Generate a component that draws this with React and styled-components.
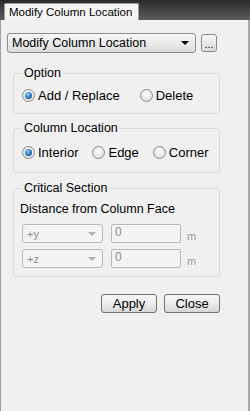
import styled, { createGlobalStyle } from 'styled-components';

const GlobalStyle = createGlobalStyle`
  html, body { margin: 0; padding: 0; }
  body {
    width: 250px;
    height: 411px;
    overflow: hidden;
    background: #f0f0f0;
    font-family: "Liberation Sans", Arial, sans-serif;
    font-size: 12px;
    color: #000;
  }
`;

const Window = styled.div`
  width: 250px;
  height: 411px;
  display: flex;
  flex-direction: column;
`;

const TabBar = styled.div`
  height: 20px;
  background: linear-gradient(#2a2a2a, #5c5c5c);
  display: flex;
  align-items: flex-end;
  padding-left: 4px;
`;

const Tab = styled.div`
  box-sizing: border-box;
  width: 135px;
  height: 17px;
  padding: 0 4px;
  background: #f4f4f4;
  border: 1px solid #9a9a9a;
  border-bottom: none;
  border-radius: 2px 2px 0 0;
  font-size: 11.5px;
  line-height: 17px;
  white-space: nowrap;
  overflow: hidden;
`;

const Panel = styled.div`
  flex: 1;
  background: #f0f0f0;
  border-left: 1px solid #a0a0a0;
  border-right: 2px solid #a8a8a8;
  padding: 13px 0 0 6px;
  display: flex;
  flex-direction: column;
`;

const TopRow = styled.div`
  display: flex;
  align-items: center;
  gap: 5px;
`;

const Combo = styled.div`
  box-sizing: border-box;
  width: ${(p) => p.width}px;
  height: ${(p) => p.height || 19}px;
  border: 1px solid ${(p) => (p.disabled ? '#b8b8b8' : '#8a8a8a')};
  border-radius: 3px;
  background: ${(p) => (p.disabled ? '#f4f4f4' : 'linear-gradient(#f7f7f7, #dcdcdc)')};
  color: ${(p) => (p.disabled ? '#8c8c8c' : '#000')};
  display: flex;
  align-items: center;
  justify-content: space-between;
  padding: 0 6px 0 4px;
  font-size: ${(p) => (p.disabled ? 11 : 12.5)}px;
  white-space: nowrap;
`;

const Arrow = styled.span`
  width: 0;
  height: 0;
  border-left: 4px solid transparent;
  border-right: 4px solid transparent;
  border-top: 4px solid ${(p) => (p.disabled ? '#b0b0b0' : '#000')};
`;

const SmallButton = styled.div`
  box-sizing: border-box;
  width: 16px;
  height: 18px;
  border: 1px solid #8a8a8a;
  border-radius: 3px;
  background: linear-gradient(#f7f7f7, #dcdcdc);
  font-size: 11px;
  display: flex;
  align-items: flex-end;
  justify-content: center;
  line-height: 13px;
`;

const Group = styled.fieldset`
  box-sizing: border-box;
  width: 207px;
  margin: ${(p) => p.top}px 0 0 6px;
  padding: ${(p) => p.pad};
  border: 1px solid #dcdcdc;
  border-radius: 3px;
  min-width: 0;
  & > legend {
    padding: 0 2px;
    font-size: 12.5px;
    line-height: 15px;
  }
`;

const RadioRow = styled.div`
  display: flex;
  align-items: center;
  height: 20px;
`;

const RadioItem = styled.label`
  display: flex;
  align-items: center;
  gap: 3px;
  font-size: 13px;
  margin-right: ${(p) => p.gap || 0}px;
`;

const RadioDot = styled.span`
  box-sizing: border-box;
  width: 13px;
  height: 13px;
  border-radius: 50%;
  border: 1px solid #8d8d8d;
  background: radial-gradient(circle at 50% 40%, #ffffff, #d4d4d4);
  display: flex;
  align-items: center;
  justify-content: center;
  &::after {
    content: '';
    display: ${(p) => (p.checked ? 'block' : 'none')};
    width: 7px;
    height: 7px;
    border-radius: 50%;
    background: radial-gradient(circle at 40% 35%, #8fd2ff, #1b6eb8 60%, #0b3f7a);
  }
`;

const Caption = styled.div`
  font-size: 12.5px;
  line-height: 16px;
  margin: 0 0 7px -2px;
`;

const FieldRow = styled.div`
  display: flex;
  align-items: center;
  margin-top: ${(p) => p.top || 0}px;
`;

const Input = styled.div`
  box-sizing: border-box;
  width: 70px;
  height: 19px;
  margin-left: 8px;
  border: 1px solid #b8b8b8;
  border-radius: 2px;
  background: #f4f4f4;
  color: #8c8c8c;
  font-size: 12px;
  padding: 0 0 0 3px;
  line-height: 15px;
`;

const Unit = styled.span`
  color: #9a9a9a;
  font-size: 11px;
  margin: 5px 0 0 6px;
`;

const Buttons = styled.div`
  display: flex;
  gap: 7px;
  margin: 17px 0 0 94px;
`;

const Button = styled.div`
  box-sizing: border-box;
  width: 56px;
  height: 19px;
  border: 1px solid #707070;
  border-radius: 3px;
  background: linear-gradient(#f8f8f8 0%, #ececec 50%, #d6d6d6 100%);
  font-size: 13px;
  display: flex;
  align-items: center;
  justify-content: center;
`;

const Radio = ({ label, checked, gap }) => (
  <RadioItem gap={gap}>
    <RadioDot checked={checked} />
    {label}
  </RadioItem>
);

export default function App() {
  return (
    <>
      <GlobalStyle />
      <Window>
        <TabBar>
          <Tab>Modify Column Location</Tab>
        </TabBar>
        <Panel>
          <TopRow>
            <Combo width={189} height={20}>
              Modify Column Location
              <Arrow />
            </Combo>
            <SmallButton>...</SmallButton>
          </TopRow>

          <Group top={13} pad="4px 0 8px 8px">
            <legend>Option</legend>
            <RadioRow>
              <Radio label="Add / Replace" checked gap={20} />
              <Radio label="Delete" />
            </RadioRow>
          </Group>

          <Group top={7} pad="6px 0 10px 8px">
            <legend>Column Location</legend>
            <RadioRow>
              <Radio label="Interior" checked gap={14} />
              <Radio label="Edge" gap={14} />
              <Radio label="Corner" />
            </RadioRow>
          </Group>

          <Group top={8} pad="5px 0 8px 8px">
            <legend>Critical Section</legend>
            <Caption>Distance from Column Face</Caption>
            <FieldRow>
              <Combo width={81} disabled>
                +y
                <Arrow disabled />
              </Combo>
              <Input>0</Input>
              <Unit>m</Unit>
            </FieldRow>
            <FieldRow top={6}>
              <Combo width={81} disabled>
                +z
                <Arrow disabled />
              </Combo>
              <Input>0</Input>
              <Unit>m</Unit>
            </FieldRow>
          </Group>

          <Buttons>
            <Button>Apply</Button>
            <Button>Close</Button>
          </Buttons>
        </Panel>
      </Window>
    </>
  );
}
